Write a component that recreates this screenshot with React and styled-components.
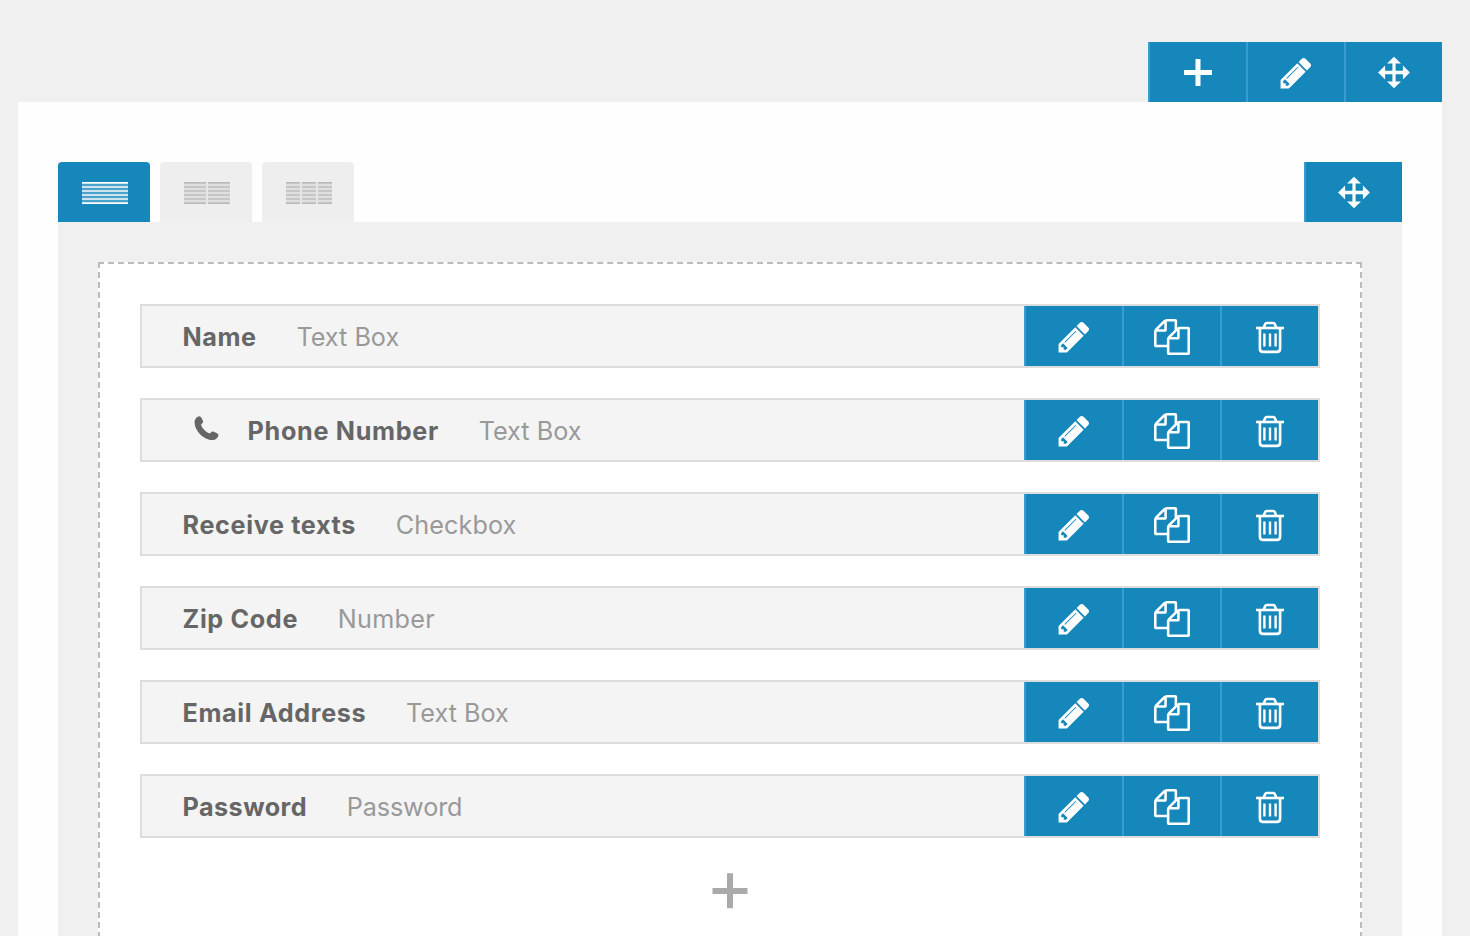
import React from "react";
import styled, { createGlobalStyle, css } from "styled-components";

const BLUE = "#1587ba";

const GlobalStyle = createGlobalStyle`
  *, *::before, *::after { box-sizing: border-box; }
  html, body { margin: 0; padding: 0; height: 100%; overflow: hidden; }
  body {
    background: #f0f0f0;
    font-family: Inter, "Liberation Sans", sans-serif;
    -webkit-font-smoothing: antialiased;
  }
`;

const Page = styled.main`
  height: 936px;
  padding: 42px 28px 0 18px;
  overflow: hidden;
`;

const PageActions = styled.div`
  display: flex;
  justify-content: flex-end;
`;

const Section = styled.section`
  width: 1424px;
  height: 1000px;
  padding: 60px 40px 0;
  background: #fefefe;
`;

const SectionBar = styled.div`
  display: flex;
  justify-content: space-between;
  height: 60px;
`;

const Tabs = styled.div`
  display: flex;
  gap: 10px;
`;

const Tab = styled.button`
  display: flex;
  align-items: center;
  justify-content: center;
  width: 92px;
  height: 60px;
  padding: 2px 0 0 2px;
  border: 0;
  border-radius: 4px 4px 0 0;
  background: ${(p) => (p.$active ? BLUE : "#eeeeee")};
`;

const Columns = styled.span`
  display: flex;
  gap: 2px;
  width: 46px;
  height: 22px;
  background: ${(p) => (p.$active ? "transparent" : "#e6e6e6")};
`;

const Column = styled.span`
  flex: 1;
  border-style: solid;
  border-width: 1px 0;
  ${(p) =>
    p.$active
      ? css`
          border-color: #ffffff;
          background: repeating-linear-gradient(#cde5f0 0 1px, #4aa3cb 1px 3px, #cde5f0 3px 4px);
        `
      : css`
          border-color: #b9b9b9;
          background: repeating-linear-gradient(#c6c6c6 0 1px, #dfdfdf 1px 3px, #c6c6c6 3px 4px);
        `}
`;

const ActionGroup = styled.div`
  display: flex;
`;

const Action = styled.button`
  display: flex;
  align-items: center;
  justify-content: center;
  width: 98px;
  height: 60px;
  padding: ${(p) => p.$drop ?? 2}px 0 0;
  border: 0;
  border-left: 2px solid #3a9bd0;
  background: ${BLUE};
  color: #fff;
`;

const Glyph = styled.svg`
  display: block;
  width: 36px;
  height: 36px;
  fill: currentColor;
  overflow: visible;
`;

const ColumnArea = styled.div`
  height: 900px;
  padding: 40px;
  background: #f0f0f0;
`;

const DropZone = styled.div`
  height: 816px;
  padding: 40px;
  border: 2px dashed #bbbbbb;
  background: #fff;
`;

const FieldList = styled.div`
  display: flex;
  flex-direction: column;
  gap: 30px;
`;

const Field = styled.div`
  display: flex;
  align-items: center;
  justify-content: space-between;
  height: 64px;
  border: 2px solid #dddddd;
  background: #f4f4f4;
`;

const FieldInfo = styled.div`
  display: flex;
  align-items: center;
  padding: 2px 0 0 40.5px;
  font-size: 25.2px;
  line-height: 58px;
  white-space: nowrap;
`;

const FieldIcon = styled.svg`
  width: 25px;
  height: 25px;
  margin: 0 29px 6px 11px;
  fill: #666;
`;

const FieldName = styled.span`
  margin-right: 39.7px;
  color: #666;
  font-weight: 700;
  letter-spacing: ${(p) => p.$track || 0}px;
`;

const FieldType = styled.span`
  color: #999;
  letter-spacing: ${(p) => p.$track || 0}px;
`;

const AddField = styled.button`
  display: flex;
  justify-content: center;
  width: 100%;
  margin-top: 35px;
  padding: 0;
  border: 0;
  background: transparent;
  color: #aaa;
`;

const PlusIcon = () => (
  <Glyph viewBox="0 0 36 36">
    <path d="M15.500 5h5v11.100h11.500v4.800h-11.500v11.100h-5v-11.100h-11.500v-4.800h11.500z" />
  </Glyph>
);

const PencilIcon = () => (
  <Glyph viewBox="0 0 1792 1792">
    <path d="M491 1536l91-91-235-235-91 91v107h128v128h107zm523-928q0-22-22-22-10 0-17 7l-542 542q-7 7-7 17 0 22 22 22 10 0 17-7l542-542q7-7 7-17zm-54-192l416 416-832 832h-416v-416zm683 96q0 53-37 90l-166 166-416-416 166-165q36-38 90-38 53 0 91 38l235 234q37 39 37 91z" />
  </Glyph>
);

const MoveIcon = () => (
  <Glyph viewBox="0 0 36 36">
    <path d="M18 2.800l7 6.700h-5.400v7.300h7.300v-5.400l7 7.100-7 7.100v-5.400h-7.300v7.300h5.400l-7 6.700-7-6.700h5.400v-7.300h-7.300v5.400l-7-7.100 7-7.100v5.400h7.300v-7.300h-5.400z" />
  </Glyph>
);

const CopyIcon = () => (
  <Glyph viewBox="0 0 1792 1792">
    <path d="M1696 384q40 0 68 28t28 68v1216q0 40-28 68t-68 28h-960q-40 0-68-28t-28-68v-288h-544q-40 0-68-28t-28-68v-672q0-40 20-88t48-76l408-408q28-28 76-48t88-20h416q40 0 68 28t28 68v328q68-40 128-40h416zm-544 213l-299 299h299v-299zm-640-384l-299 299h299v-299zm196 647l316-316v-416h-384v416q0 40-28 68t-68 28h-416v640h512v-256q0-40 20-88t48-76zm956 804v-1152h-384v416q0 40-28 68t-68 28h-416v640h896z" />
  </Glyph>
);

const TrashIcon = () => (
  <Glyph viewBox="0 0 36 36">
    <g fill="none" stroke="currentColor" strokeWidth="2.6">
      <path d="M4 9h28" />
      <path d="M11.600 9l1.600-4q.4-1 1.500-1h6.600q1.100 0 1.500 1l1.600 4" />
      <path d="M7.900 9v20.500q0 3.400 3 3.400h14.200q3 0 3-3.400v-20.500" />
      <path strokeWidth="2.400" d="M12.400 14.500v13M18 14.500v13M23.600 14.500v13" />
    </g>
  </Glyph>
);

const PhoneIcon = () => (
  <FieldIcon viewBox="0 0 25 25">
    <path d="M5.200.3C7 .1 7.900 2.600 8.800 4.600c.7 1.600.3 2.100-.7 2.900-1 .8-1.200 1.300-.6 2.500 1.500 3 3.900 5.400 6.900 7 1.100.6 1.700.4 2.500-.6.8-1 1.400-1.300 2.900-.7 2.200.9 4.700 1.800 4.600 3.500-.1 2.500-3 4.800-5.700 4.800C9.300 24 .6 14.500.6 6.200.6 3.400 2.700.6 5.200.3z" />
  </FieldIcon>
);

const fields = [
  { name: "Name", nameTrack: 0.6, type: "Text Box" },
  { name: "Phone Number", nameTrack: 0.7, type: "Text Box", icon: true },
  { name: "Receive texts", nameTrack: 0.65, type: "Checkbox", typeTrack: 0.1 },
  { name: "Zip Code", nameTrack: 0.65, type: "Number", typeTrack: 0.3 },
  { name: "Email Address", nameTrack: 0.65, type: "Text Box" },
  { name: "Password", nameTrack: 0.45, type: "Password", typeTrack: -0.1 },
];

const layouts = [1, 2, 3];

export default function App() {
  return (
    <>
      <GlobalStyle />
      <Page>
        <PageActions>
          <Action aria-label="Add" $drop={0}><PlusIcon /></Action>
          <Action aria-label="Edit"><PencilIcon /></Action>
          <Action aria-label="Move" $drop={0}><MoveIcon /></Action>
        </PageActions>
        <Section>
          <SectionBar>
            <Tabs>
              {layouts.map((count) => (
                <Tab key={count} $active={count === 1} aria-label={`${count} columns`}>
                  <Columns $active={count === 1}>
                    {Array.from({ length: count }, (_, j) => (
                      <Column key={j} $active={count === 1} />
                    ))}
                  </Columns>
                </Tab>
              ))}
            </Tabs>
            <Action aria-label="Move row" $drop={0}><MoveIcon /></Action>
          </SectionBar>
          <ColumnArea>
            <DropZone>
              <FieldList>
                {fields.map((f) => (
                  <Field key={f.name}>
                    <FieldInfo>
                      {f.icon && <PhoneIcon />}
                      <FieldName $track={f.nameTrack}>{f.name}</FieldName>
                      <FieldType $track={f.typeTrack}>{f.type}</FieldType>
                    </FieldInfo>
                    <ActionGroup>
                      <Action aria-label="Edit"><PencilIcon /></Action>
                      <Action aria-label="Duplicate"><CopyIcon /></Action>
                      <Action aria-label="Delete"><TrashIcon /></Action>
                    </ActionGroup>
                  </Field>
                ))}
              </FieldList>
              <AddField aria-label="Add field">
                <Glyph viewBox="0 0 36 36">
                  <path d="M15 .3h6v14.700h14.500v6h-14.500v14.300h-6v-14.300h-14.500v-6h14.500z" />
                </Glyph>
              </AddField>
            </DropZone>
          </ColumnArea>
        </Section>
      </Page>
    </>
  );
}
